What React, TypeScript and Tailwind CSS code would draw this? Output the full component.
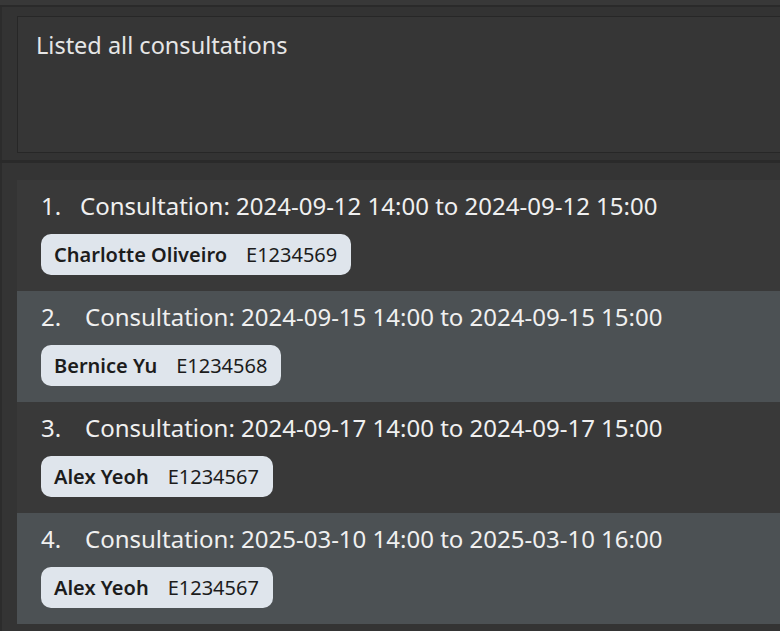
import React from "react";

const items = [
  { n: "1.", w: "w-[39px]", text: "Consultation: 2024-09-12 14:00 to 2024-09-12 15:00", name: "Charlotte Oliveiro", id: "E1234569" },
  { n: "2.", w: "w-[44px]", text: "Consultation: 2024-09-15 14:00 to 2024-09-15 15:00", name: "Bernice Yu", id: "E1234568" },
  { n: "3.", w: "w-[44px]", text: "Consultation: 2024-09-17 14:00 to 2024-09-17 15:00", name: "Alex Yeoh", id: "E1234567" },
  { n: "4.", w: "w-[44px]", text: "Consultation: 2025-03-10 14:00 to 2025-03-10 16:00", name: "Alex Yeoh", id: "E1234567" },
];

export default function App() {
  return (
    <div
      className="w-[780px] h-[631px] overflow-hidden bg-[#333333] flex flex-col"
      style={{ fontFamily: '"Noto Sans", "Open Sans", sans-serif' }}
    >
      <div className="h-[7px] shrink-0 bg-[#383838] border-b-2 border-[#2a2a2a]" />
      <div className="shrink-0 border-l-2 border-[#2c2c2c] pl-[15px] pt-[9px] pb-[7px]">
        <div className="h-[137px] w-[800px] border border-[#272727] bg-[#363636] pl-[18px] pt-[13px] text-[23.5px] leading-[30px] text-[#e6e6e6]">
          Listed all consultations
        </div>
      </div>
      <div className="shrink-0 h-[3px] bg-[#2a2a2a]" />
      <div className="flex-1 border-l-2 border-[#2c2c2c] pl-[15px] pt-[17px] bg-[#343434]">
        {items.map((it, i) => (
          <div
            key={i}
            className={`w-[800px] h-[111px] pl-[24px] pt-[10px] ${i % 2 === 0 ? "bg-[#393939]" : "bg-[#4c5154]"}`}
          >
            <div className="flex text-[24px] leading-[32px] text-[#f0f0f0] whitespace-nowrap">
              <span className={it.w}>{it.n}</span>
              <span>{it.text}</span>
            </div>
            <div className="mt-[12px] inline-flex items-center h-[41px] rounded-[10px] bg-[#dfe5ec] pl-[13px] pr-[14px] text-[20px] text-[#1c1c1c] whitespace-nowrap">
              <span className="font-semibold">{it.name}</span>
              <span className="ml-[19px]">{it.id}</span>
            </div>
          </div>
        ))}
      </div>
    </div>
  );
}
